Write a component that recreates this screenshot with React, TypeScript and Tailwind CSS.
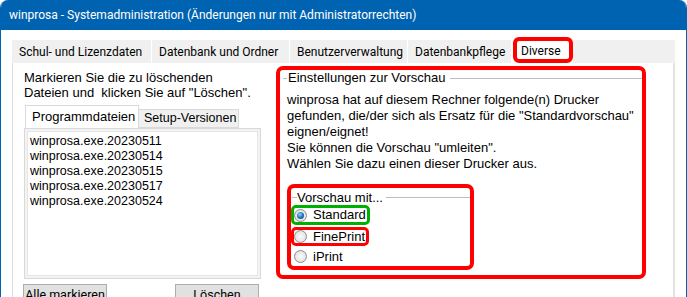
import React from "react";

const uiFont = "font-['Roboto',sans-serif]";
const bodyFont = "font-['Liberation_Sans',Arial,sans-serif]";

const mainTabs = [
  { label: "Schul- und Lizenzdaten", w: "w-[140px]" },
  { label: "Datenbank und Ordner", w: "w-[138px]" },
  { label: "Benutzerverwaltung", w: "w-[118px]" },
  { label: "Datenbankpflege", w: "w-[104px]" },
];

const files = [
  "winprosa.exe.20230511",
  "winprosa.exe.20230514",
  "winprosa.exe.20230515",
  "winprosa.exe.20230517",
  "winprosa.exe.20230524",
];

function Radio({ checked }: { checked?: boolean }) {
  return (
    <span className="w-[13px] h-[13px] shrink-0 rounded-full border border-[#8f8f8f] bg-[radial-gradient(circle_at_50%_50%,#fbfbfb_0%,#e9e9e9_55%,#c9c9c9_100%)] flex items-center justify-center">
      {checked && (
        <span className="w-[7px] h-[7px] rounded-full bg-[radial-gradient(circle_at_40%_35%,#8fd3ff_0%,#1c6fb3_55%,#0a3f73_100%)]" />
      )}
    </span>
  );
}

export default function App() {
  return (
    <div
      className={`w-[687px] h-[297px] overflow-hidden bg-white border-x border-[#0063b1] rounded-t-[8px] ${bodyFont}`}
    >
      {/* Title bar */}
      <div
        className={`h-[30px] bg-[#0063b1] text-white text-[12px] flex items-center pl-[8px] ${uiFont}`}
      >
        winprosa - Systemadministration (Änderungen nur mit Administratorrechten)
      </div>

      <div className="pt-[7px] pl-[11px]">
        <div className="w-[663px]">
          {/* Main tab strip */}
          <div className={`flex items-end h-[26px] text-[12px] text-black ${uiFont}`}>
            {mainTabs.map((t) => (
              <div
                key={t.label}
                className={`${t.w} h-[23px] bg-[#f0f0f0] border-r border-white pl-[7px] flex items-center`}
              >
                {t.label}
              </div>
            ))}
            <div className="w-[60px] h-[26px] ml-[1px] border-4 border-[#ff0000] rounded-[6px] bg-white pl-[4px] flex items-start pt-[1px]">
              Diverse
            </div>
            <div className="flex-1 h-[23px] bg-[#f0f0f0]" />
          </div>

          {/* Tab panel */}
          <div className="h-[240px] border-l border-[#dadada] border-r-2 border-r-[#e3e3e3] flex items-start text-[13px] text-black">
            {/* Left column */}
            <div className="ml-[11px] mt-[7px] w-[237px]">
              <p className="leading-[15px]">
                Markieren Sie die zu löschenden
                <br />
                Dateien und&nbsp; klicken Sie auf "Löschen".
              </p>

              <div className="mt-[5px] flex items-end h-[23px] pl-[1px]">
                <div className="w-[114px] h-[23px] bg-white border border-b-0 border-[#d9d9d9] pl-[6px] flex items-center">
                  Programmdateien
                </div>
                <div className="w-[100px] h-[19px] bg-[#f0f0f0] border border-l-0 border-[#d9d9d9] pl-[5px] flex items-center text-[12.5px]">
                  Setup-Versionen
                </div>
              </div>
              <div className="h-[151px] border border-[#d9d9d9] bg-[#f3f3f3] p-[2px]">
                <div className="h-full bg-white border border-[#e6e6e6] pl-[2px] pt-[2px] text-[12.5px] leading-[15px]">
                  {files.map((f) => (
                    <div key={f}>{f}</div>
                  ))}
                </div>
              </div>

              <div className={`mt-[5px] flex gap-[68px] -ml-[1px] text-[12.5px] ${uiFont}`}>
                <button className="w-[84px] h-[23px] bg-[#e1e1e1] border border-[#adadad] whitespace-nowrap">
                  Alle markieren
                </button>
                <button className="w-[84px] h-[23px] bg-[#e1e1e1] border border-[#adadad] whitespace-nowrap">
                  Löschen
                </button>
              </div>
            </div>

            {/* Right column: group box */}
            <div className="ml-[15px] mt-[3px] w-[370px] h-[213px] border-4 border-[#ff0000] rounded-[7px]">
              <div className="flex items-center h-[16px] pl-[3px]">
                <span className="w-[4px] h-px bg-[#bcbcbc]" />
                <span className="px-[1px] leading-[16px]">Einstellungen zur Vorschau</span>
                <span className="flex-1 h-px bg-[#bcbcbc] ml-[3px]" />
              </div>
              <p className="mt-[6px] pl-[7px] leading-[16px]">
                winprosa hat auf diesem Rechner folgende(n) Drucker
                <br />
                gefunden, die/der sich als Ersatz für die "Standardvorschau"
                <br />
                eignen/eignet!
                <br />
                Sie können die Vorschau "umleiten".
                <br />
                Wählen Sie dazu einen dieser Drucker aus.
              </p>

              <div className="mt-[12px] ml-[7px] w-[187px] h-[86px] border-4 border-[#ff0000] rounded-[7px]">
                <div className="flex items-center h-[15px] mt-[2px] pl-[1px]">
                  <span className="w-[5px] h-px bg-[#bcbcbc]" />
                  <span className="leading-[15px]">Vorschau mit...</span>
                  <span className="flex-1 h-px bg-[#bcbcbc] ml-[3px]" />
                </div>
                <div className="flex flex-col items-start">
                  <label className="inline-flex items-center gap-[6px] h-[20px] border-[3px] border-[#00b000] rounded-[5px] pl-0 pr-[1px]">
                    <Radio checked />
                    Standard
                  </label>
                  <label className="mt-[2px] inline-flex items-center gap-[6px] h-[19px] border-[3px] border-[#ff0000] rounded-[5px] pr-[1px]">
                    <Radio />
                    FinePrint
                  </label>
                  <label className="mt-[1px] inline-flex items-center gap-[6px] h-[19px] border-[3px] border-transparent">
                    <Radio />
                    iPrint
                  </label>
                </div>
              </div>
            </div>
          </div>
        </div>
      </div>
    </div>
  );
}
